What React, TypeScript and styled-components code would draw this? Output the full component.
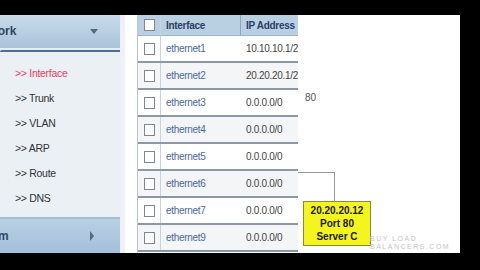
import React from "react";
import styled, { createGlobalStyle } from "styled-components";

const GlobalStyle = createGlobalStyle`
  html, body {
    margin: 0;
    padding: 0;
    background: #000;
  }
  body {
    font-family: "Liberation Sans", Arial, sans-serif;
  }
`;

const rows = [
  { name: "ethernet1", ip: "10.10.10.1/24" },
  { name: "ethernet2", ip: "20.20.20.1/24" },
  { name: "ethernet3", ip: "0.0.0.0/0" },
  { name: "ethernet4", ip: "0.0.0.0/0" },
  { name: "ethernet5", ip: "0.0.0.0/0" },
  { name: "ethernet6", ip: "0.0.0.0/0" },
  { name: "ethernet7", ip: "0.0.0.0/0" },
  { name: "ethernet9", ip: "0.0.0.0/0" },
];

const menu = ["Interface", "Trunk", "VLAN", "ARP", "Route", "DNS"];

const App = () => {
  return (
    <>
      <GlobalStyle />
      <Screen>
        <Frame>
          <Sidebar>
            <SectionHead>
              <HeadLabel $shift={-31}>Network</HeadLabel>
              <DownArrow />
            </SectionHead>
            <HeadRule />
            <MenuList>
              {menu.map((m, i) => (
                <MenuItem key={m} $active={i === 0}>
                  {">> "}
                  {m}
                </MenuItem>
              ))}
            </MenuList>
            <FooterHead>
              <HeadLabel $shift={-34}>System</HeadLabel>
              <RightArrow />
            </FooterHead>
          </Sidebar>
          <Gutter />
          <Table>
            <HeadRow>
              <CheckCell>
                <Box />
              </CheckCell>
              <NameCell $head>Interface</NameCell>
              <IpCell $head>IP Address</IpCell>
            </HeadRow>
            {rows.map((r, i) => (
              <Row key={r.name} $alt={i % 2 === 1}>
                <CheckCell>
                  <Box />
                </CheckCell>
                <NameCell>{r.name}</NameCell>
                <IpCell>{r.ip}</IpCell>
              </Row>
            ))}
          </Table>
          <Canvas>
            <PortLabel>80</PortLabel>
            <Connector />
            <Callout>
              20.20.20.12
              <br />
              Port 80
              <br />
              Server C
            </Callout>
            <Watermark>
              BUY LOAD
              <br />
              BALANCERS.COM
            </Watermark>
          </Canvas>
        </Frame>
      </Screen>
    </>
  );
};

const Screen = styled.div`
  width: 480px;
  height: 270px;
  background: #000;
  padding-top: 15px;
  box-sizing: border-box;
  overflow: hidden;
`;

const Frame = styled.div`
  width: 460px;
  height: 238px;
  background: #fff;
  display: flex;
  overflow: hidden;
`;

const Sidebar = styled.div`
  width: 120px;
  flex-shrink: 0;
  display: flex;
  flex-direction: column;
  background: #e6ecf3;
  border-right: 5px solid #eef2f7;
`;

const SectionHead = styled.div`
  height: 35px;
  display: flex;
  align-items: center;
  justify-content: space-between;
  padding-right: 22px;
  background: linear-gradient(#c9dbea, #a9c3da);
  overflow: hidden;
`;

const HeadLabel = styled.span<{ $shift: number }>`
  margin-left: ${(p) => p.$shift}px;
  font-size: 12px;
  font-weight: bold;
  color: #2f4763;
`;

const DownArrow = styled.span`
  width: 0;
  height: 0;
  border-left: 4px solid transparent;
  border-right: 4px solid transparent;
  border-top: 5px solid #4f6b88;
`;

const RightArrow = styled.span`
  width: 0;
  height: 0;
  border-top: 5px solid transparent;
  border-bottom: 5px solid transparent;
  border-left: 4px solid #4f6b88;
`;

const HeadRule = styled.div`
  height: 2px;
  background: #4e6f8d;
  margin-top: 2px;
  border-top-left-radius: 6px;
`;

const MenuList = styled.div`
  flex: 1;
  display: flex;
  flex-direction: column;
  padding: 15px 0 0 15px;
  background: #ebf0f5;
`;

const MenuItem = styled.div<{ $active?: boolean }>`
  height: 25px;
  font-size: 10.5px;
  letter-spacing: -0.3px;
  color: ${(p) => (p.$active ? "#e8425b" : "#333")};
`;

const FooterHead = styled(SectionHead)`
  height: 37px;
  border-top: 2px solid #a8bdd0;
  padding-right: 26px;
  background: linear-gradient(#b9d0e4, #a4bfd8);
`;

const Gutter = styled.div`
  width: 12px;
  flex-shrink: 0;
`;

const Table = styled.div`
  width: 160px;
  flex-shrink: 0;
  display: flex;
  flex-direction: column;
  border-left: 1px solid #b8c4d0;
`;

const HeadRow = styled.div`
  height: 20px;
  display: flex;
  background: #b9cfe2;
  border-bottom: 1px solid #9fb3c6;
`;

const Row = styled.div<{ $alt?: boolean }>`
  height: 25px;
  display: flex;
  background: ${(p) => (p.$alt ? "#f3f5f7" : "#fff")};
  border-bottom: 2px solid #8c98a5;
`;

const CheckCell = styled.div`
  width: 22px;
  display: flex;
  align-items: center;
  justify-content: center;
  border-right: 1px solid #c9d3dd;
`;

const Box = styled.div`
  width: 9px;
  height: 10px;
  border: 1px solid #7d8893;
  background: #fff;
`;

const NameCell = styled.div<{ $head?: boolean }>`
  width: 80px;
  display: flex;
  align-items: center;
  padding-left: 5px;
  box-sizing: border-box;
  font-size: 10px;
  letter-spacing: -0.3px;
  font-weight: ${(p) => (p.$head ? "bold" : "normal")};
  color: ${(p) => (p.$head ? "#2b4066" : "#4b6a9b")};
  border-right: 1px solid ${(p) => (p.$head ? "#8ea6bd" : "transparent")};
`;

const IpCell = styled.div<{ $head?: boolean }>`
  flex: 1;
  display: flex;
  align-items: center;
  padding-left: 5px;
  overflow: hidden;
  white-space: nowrap;
  font-size: 10px;
  letter-spacing: -0.3px;
  font-weight: ${(p) => (p.$head ? "bold" : "normal")};
  color: ${(p) => (p.$head ? "#2b4066" : "#444")};
`;

const Canvas = styled.div`
  position: relative;
  flex: 1;
`;

const PortLabel = styled.span`
  position: absolute;
  left: 7px;
  top: 77px;
  font-size: 10px;
  color: #555;
`;

const Connector = styled.div`
  position: absolute;
  left: 0;
  top: 157px;
  width: 36px;
  height: 30px;
  border-top: 1px solid #999;
  border-right: 1px solid #999;
`;

const Callout = styled.div`
  position: absolute;
  left: 5px;
  top: 186px;
  width: 68px;
  height: 45px;
  box-sizing: border-box;
  border: 1px solid #8a8a3a;
  background: #f4f51e;
  font-size: 10px;
  font-weight: bold;
  line-height: 13px;
  color: #1a1a1a;
  text-align: center;
  padding-top: 2px;
`;

const Watermark = styled.div`
  position: absolute;
  left: 72px;
  top: 220px;
  font-size: 7px;
  line-height: 8px;
  letter-spacing: 1.5px;
  color: #c4c4c4;
`;

export default App;
